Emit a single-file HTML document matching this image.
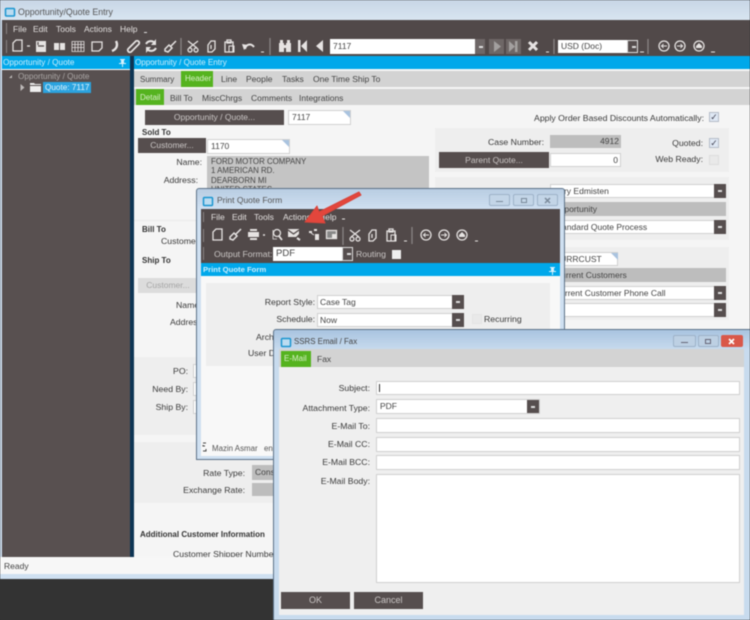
<!DOCTYPE html>
<html><head><meta charset="utf-8"><style>
html,body{margin:0;padding:0}
body{width:750px;height:620px;overflow:hidden;background:#333;position:relative;font:8.5px "Liberation Sans",sans-serif;color:#3a3a3a}
#w{position:absolute;left:0;top:0;width:750px;height:620px;overflow:hidden;filter:blur(.4px)}
.b,.t,.r{position:absolute}
.t,.r{white-space:nowrap;line-height:11px;height:11px}
.l{color:#e2dfde}
.bd{font-weight:bold;color:#333;font-size:8px}
.btn{position:absolute;background:#564e4e;color:#c9c5c4;text-align:center}
.f{position:absolute;background:#fff;border:1px solid #d0d0d0;box-sizing:border-box;padding-left:3px;color:#444;white-space:nowrap;overflow:hidden}
.g{position:absolute;background:#bdbdbd;box-sizing:border-box;padding-left:3px;color:#444;white-space:nowrap;overflow:hidden}
.dd{position:absolute;background:#564e4e;width:12px}
.dd:after{content:"";position:absolute;left:4px;top:45%;width:4px;height:2px;background:#ddd}
.cb{position:absolute;width:10px;height:10px;background:#dfe8f4;border:1px solid #b5bcc8;box-sizing:border-box;color:#445;font-size:9px;line-height:8px;text-align:center}
.c{position:absolute;border-top:7px solid #a9c3df;border-left:7px solid transparent;width:0;height:0}
.ic{position:absolute;left:0;top:0;width:750px;height:620px;overflow:visible}
.s{font-size:8.7px}
.wb{position:absolute;border:1px solid #9db2c8;box-sizing:border-box;background:#c3d5e7;border-radius:2px}
</style></head><body><div id="w">

<!-- main window -->
<div class="b" style="left:0;top:0;width:750px;height:20px;background:linear-gradient(#c8d6e6,#d8e5f1)"></div>
<svg class="ic"><rect x="5.500" y="8.500" width="9" height="7.500" rx="1" fill="#bcdcf0" stroke="#1a95d0" stroke-width="1.500"/></svg>
<div class="t" style="left:18px;top:7px;color:#555;font-size:8.800px">Opportunity/Quote Entry</div>
<div class="b" style="left:0;top:20px;width:750px;height:559px;background:#cfe0f1"></div>
<div class="b" style="left:2px;top:20px;width:748px;height:36px;background:#514949"></div>
<div class="b" style="left:6px;top:23px;width:1px;height:11px;background:#8a8484"></div>
<div class="b" style="left:6px;top:40px;width:1px;height:13px;background:#8a8484"></div>
<div class="t l" style="left:13px;top:24px">File</div>
<div class="t l" style="left:33px;top:24px">Edit</div>
<div class="t l" style="left:56px;top:24px">Tools</div>
<div class="t l" style="left:84px;top:24px">Actions</div>
<div class="t l" style="left:120px;top:24px">Help</div>
<div class="b" style="left:144px;top:32px;width:3px;height:1px;background:#ddd"></div>

<svg class="ic" fill="none" stroke="#e6e3e2" stroke-width="1.300">
<path d="M13 51V43l3-3h6v11z"/><path d="M27 46h3"/>
<path fill="#e6e3e2" stroke="none" d="M36 41h10v11H36z"/><path stroke="#514949" stroke-width="1.200" d="M38 46h6M38 42v3"/>
<path fill="#e6e3e2" stroke="none" d="M54 43h5v7h-5zM60 43h5v7h-5z"/>
<path d="M72 41.500h12v10H72zM72 44.500h12M72 47.500h12M75 42v9M78 42v9M81 42v9" stroke-width=".8"/>
<path d="M92 42h10v6l-3 3h-7z"/>
<path stroke-width="2.400" d="M116 41c2 4 1 8-4 10"/>
<path stroke-width="1.700" d="M128 49l8-8c2-1 4 1 3 3l-8 8c-2 1-4-1-3-3z"/>
<path stroke-width="2" d="M146 44a5.500 5.500 0 0 1 9-1M156 48a5.500 5.500 0 0 1-9 1"/><path fill="#e6e3e2" stroke="none" d="M156 39v6h-5zM146 53v-6h5z"/>
<path d="M176 41l-5 5M165 49l4-4 3 3-4 4-3-1z" stroke-width="1.500"/>
<path d="M181 38v17" stroke="#8a8484"/>
<path stroke-width="1.300" d="M188 41l9 7M198 41l-9 7"/><circle cx="190" cy="50" r="2"/><circle cx="196" cy="50" r="2"/>
<path d="M208 45l3-4h4v8l-3 3h-4z"/><path d="M211 45v4"/>
<path d="M225 42h8v10h-8zM227 40h4v3h-4z"/><path d="M229 46h5v6h-5z" stroke-width="1"/>
<path stroke-width="2" d="M245 49c1-5 6-6 9-2"/><path fill="#e6e3e2" stroke="none" d="M242 44l6 1-4 5z"/>
<path d="M261 52h3" stroke-width="1"/><path d="M270 38v17" stroke="#8a8484"/>
<path fill="#e6e3e2" stroke="none" d="M279 43h5v9h-5zM286 43h5v9h-5zM280 40h3v3h-3zM287 40h3v3h-3zM284 45h2v3h-2z"/>
<path fill="#e6e3e2" stroke="none" d="M298 40h2.500v12H298zM307 40v12l-6-6zM323 40v12l-7-6z"/>
<path stroke-width="3" d="M529 42l8 8M537 42l-8 8"/>
<path d="M546 52h3M640 52h4M711 52h4" stroke-width="1"/>
<path d="M554 39v15M648 39v15" stroke="#8a8484"/>
<circle cx="664" cy="46" r="5"/><path d="M661 46h6M663.500 44l-2 2 2 2" stroke-width="1"/>
<circle cx="680" cy="46" r="5"/><path d="M677 46h6M680.500 44l2 2-2 2" stroke-width="1"/>
<circle cx="699" cy="46" r="5"/><path fill="#e6e3e2" stroke="none" d="M699 43l3 3v2h-6v-2z"/>
</svg>

<div class="f" style="left:330px;top:39px;width:146px;height:15px;line-height:15px;border:0">7117</div>
<div class="dd" style="left:475px;top:39px;width:10px;height:15px;background:#6e6767"></div>
<svg class="ic"><rect x="489" y="39" width="15" height="15" fill="#6e6766"/><path d="M494 41l7 5.500-7 5.500z" fill="#a3a09f"/><rect x="506" y="39" width="15" height="15" fill="#6e6766"/><path d="M509 41l6 5.500-6 5.500zM515 41h2.500v11H515z" fill="#a3a09f"/></svg>
<div class="f" style="left:558px;top:40px;width:70px;height:13px;line-height:13px;border:0">USD (Doc)</div>
<div class="dd" style="left:627px;top:40px;width:11px;height:13px;border:1px solid #ddd;box-sizing:border-box"></div>

<!-- left pane -->
<div class="b" style="left:2px;top:56px;width:128px;height:13px;background:#00a8ea"></div>
<div class="b" style="left:2px;top:69px;width:128px;height:1px;background:#fff"></div>
<div class="b" style="left:2px;top:70px;width:128px;height:487px;background:#585050"></div>
<div class="t" style="left:3px;top:57px;color:#cdeefc;font-size:8.200px">Opportunity / Quote</div>
<svg class="ic"><path d="M120 59h5v1h-1v3h2v1h-3v3h-1v-3h-3v-1h2v-3h-1z" fill="#d8f1fb"/><path d="M9 78l3-3v3zM20.500 84v7l4-3.500z" fill="#bdb9b8"/><path d="M30 83h4l1 1h6v1H30zM30 86h11v6H30z" fill="#eee"/></svg>
<div class="t" style="left:18px;top:71px;color:#aaa6a5;font-size:8.200px">Opportunity / Quote</div>
<div class="t" style="left:43px;top:82px;width:48px;background:#2ba3df;color:#e4f5fd;padding-left:2px;box-sizing:border-box;font-size:8.200px">Quote: 7117</div>

<!-- separator + main -->
<div class="b" style="left:130px;top:56px;width:4px;height:501px;background:#0e3554"></div>
<div class="b" style="left:134px;top:56px;width:616px;height:13px;background:#00a8ea"></div>
<div class="t" style="left:135px;top:57px;color:#cdeefc;font-size:8.100px">Opportunity / Quote Entry</div>
<div class="b" style="left:134px;top:69px;width:616px;height:488px;background:#f5f5f5"></div>
<div class="b" style="left:134px;top:71px;width:616px;height:16px;background:#d3d3d3"></div>
<div class="b" style="left:134px;top:89px;width:616px;height:16px;background:#d3d3d3"></div>
<div class="b" style="left:181px;top:71px;width:32px;height:16px;background:#55b31f"></div>
<div class="b" style="left:136px;top:89px;width:28px;height:16px;background:#55b31f"></div>
<div class="t" style="left:140px;top:74px;color:#444;font-size:8px">Summary</div>
<div class="t" style="left:185px;top:73px;color:#d8efc8;font-size:8px">Header</div>
<div class="t" style="left:221px;top:74px;color:#444">Line</div>
<div class="t" style="left:246px;top:74px;color:#444">People</div>
<div class="t" style="left:282px;top:74px;color:#444">Tasks</div>
<div class="t" style="left:313px;top:74px;color:#444">One Time Ship To</div>
<div class="t" style="left:140px;top:92px;color:#d8efc8;font-size:8px">Detail</div>
<div class="t" style="left:170px;top:93px;color:#444">Bill To</div>
<div class="t" style="left:202px;top:93px;color:#444">MiscChrgs</div>
<div class="t" style="left:251px;top:93px;color:#444">Comments</div>
<div class="t" style="left:299px;top:93px;color:#444">Integrations</div>

<div class="btn" style="left:145px;top:110px;width:139px;height:15px;line-height:15px">Opportunity / Quote...</div>
<div class="f" style="left:288px;top:110px;width:63px;height:15px;line-height:13px">7117</div><div class="c" style="left:343px;top:111px"></div>
<div class="t bd" style="left:142px;top:127px">Sold To</div>
<div class="btn" style="left:138px;top:138px;width:68px;height:15px;line-height:15px">Customer...</div>
<div class="f" style="left:207px;top:139px;width:83px;height:15px;line-height:13px">1170</div><div class="c" style="left:282px;top:140px"></div>
<div class="r s" style="right:548px;top:157px">Name:</div>
<div class="r s" style="right:552px;top:175px">Address:</div>
<div class="g" style="left:207px;top:156px;width:222px;height:60px;line-height:9.300px;padding:1px 4px;background:#c4c4c4;font-size:7.900px">FORD MOTOR COMPANY<br>1 AMERICAN RD.<br>DEARBORN MI<br>UNITED STATES</div>

<div class="r" style="right:46px;top:113px;font-size:8.700px">Apply Order Based Discounts Automatically:</div>
<div class="cb" style="left:709px;top:112px">✓</div>
<div class="b" style="left:435px;top:128px;width:294px;height:44px;background:#eee"></div>
<div class="r s" style="right:206px;top:137px">Case Number:</div>
<div class="g" style="left:550px;top:135px;width:71px;height:13px;line-height:13px;text-align:right;padding-right:2px">4912</div>
<div class="btn" style="left:439px;top:152px;width:110px;height:16px;line-height:16px">Parent Quote...</div>
<div class="f" style="left:550px;top:153px;width:71px;height:14px;line-height:12px;text-align:right;padding-right:2px">0</div>
<div class="r s" style="right:47px;top:138px">Quoted:</div>
<div class="cb" style="left:709px;top:138px">✓</div>
<div class="r s" style="right:47px;top:154px">Web Ready:</div>
<div class="cb" style="left:709px;top:155px;background:#e9e9e9;border-color:#ddd"></div>

<div class="b" style="left:435px;top:177px;width:294px;height:63px;background:#eee"></div>
<div class="f" style="left:550px;top:184px;width:176px;height:14px;line-height:12px;padding-left:4px">Tory Edmisten</div><div class="dd" style="left:714px;top:184px;height:14px"></div>
<div class="g" style="left:550px;top:202px;width:176px;height:14px;line-height:14px;padding-left:3px">Opportunity</div>
<div class="f" style="left:550px;top:220px;width:176px;height:14px;line-height:12px">Standard Quote Process</div><div class="dd" style="left:714px;top:220px;height:14px"></div>
<div class="b" style="left:435px;top:247px;width:294px;height:73px;background:#eee"></div>
<div class="f" style="left:550px;top:252px;width:68px;height:14px;line-height:12px">CURRCUST</div><div class="c" style="left:611px;top:253px"></div>
<div class="g" style="left:550px;top:268px;width:176px;height:14px;line-height:14px;padding-left:5px">Current Customers</div>
<div class="f" style="left:550px;top:286px;width:176px;height:14px;line-height:12px">Current Customer Phone Call</div><div class="dd" style="left:714px;top:286px;height:14px"></div>
<div class="f" style="left:550px;top:303px;width:176px;height:14px"></div><div class="dd" style="left:714px;top:303px;height:14px"></div>

<div class="b" style="left:134px;top:220px;width:300px;height:1px;background:#eaeaea"></div>
<div class="t bd" style="left:142px;top:224px">Bill To</div>
<div class="t s" style="left:161px;top:236px">Customer</div>
<div class="t bd" style="left:142px;top:255px">Ship To</div>
<div class="btn" style="left:138px;top:278px;width:60px;height:15px;line-height:15px;background:#dcdcdc;color:#a5a5a5">Customer...</div>
<div class="t s" style="left:176px;top:300px">Name</div>
<div class="t s" style="left:170px;top:317px">Address</div>
<div class="b" style="left:134px;top:357px;width:300px;height:78px;background:#eee"></div>
<div class="r s" style="right:562px;top:366px">PO:</div>
<div class="r s" style="right:562px;top:384px">Need By:</div>
<div class="r s" style="right:562px;top:402px">Ship By:</div>
<div class="f" style="left:193px;top:364px;width:10px;height:14px"></div>
<div class="f" style="left:193px;top:382px;width:10px;height:14px"></div>
<div class="f" style="left:193px;top:400px;width:10px;height:14px"></div>
<div class="b" style="left:134px;top:442px;width:300px;height:61px;background:#eee"></div>
<div class="r s" style="right:505px;top:468px">Rate Type:</div>
<div class="g" style="left:252px;top:465px;width:30px;height:15px;line-height:15px">Cons</div>
<div class="r s" style="right:505px;top:485px">Exchange Rate:</div>
<div class="g" style="left:252px;top:483px;width:30px;height:13px"></div>
<div class="t bd" style="left:140px;top:529px">Additional Customer Information</div>
<div class="t s" style="left:173px;top:549px">Customer Shipper Number</div>

<div class="b" style="left:0;top:557px;width:750px;height:17px;background:#f7f7f7"></div>
<div class="t" style="left:4px;top:561px;color:#444">Ready</div>
<div class="b" style="left:0;top:579px;width:750px;height:41px;background:#333"></div>

<!-- Print Quote Form dialog -->
<div class="b" style="left:196px;top:188px;width:369px;height:272px;box-sizing:border-box;border:1px solid #5d7288;border-radius:3px 3px 0 0;background:linear-gradient(#b9cde2,#cfe0f1 20px)"></div>
<svg class="ic"><rect x="203.500" y="197.500" width="9" height="8" rx="1" fill="#bcdcf0" stroke="#1a95d0" stroke-width="1.500"/></svg>
<div class="t" style="left:217px;top:195px;color:#555;font-size:8.500px">Print Quote Form</div>
<div class="wb" style="left:489px;top:194px;width:21px;height:12px"></div>
<div class="wb" style="left:513px;top:194px;width:21px;height:12px"></div>
<div class="wb" style="left:537px;top:194px;width:21px;height:12px"></div>
<svg class="ic" fill="none" stroke="#7a8a9a" stroke-width="1"><path d="M496 201.500h7"/><rect x="521.500" y="198.500" width="5" height="4"/><path d="M545 198l5 5M550 198l-5 5" stroke-width="1.500"/></svg>
<div class="b" style="left:201px;top:209px;width:359px;height:54px;background:#514949"></div>
<div class="b" style="left:203px;top:212px;width:1px;height:10px;background:#8a8484"></div>
<div class="b" style="left:203px;top:229px;width:1px;height:13px;background:#8a8484"></div>
<div class="b" style="left:203px;top:247px;width:1px;height:13px;background:#8a8484"></div>
<div class="t l" style="left:211px;top:212px">File</div>
<div class="t l" style="left:232px;top:212px">Edit</div>
<div class="t l" style="left:254px;top:212px">Tools</div>
<div class="t l" style="left:283px;top:212px">Actions</div>
<div class="t l" style="left:319px;top:212px">Help</div>
<svg class="ic" fill="none" stroke="#e6e3e2" stroke-width="1.300">
<path d="M342 219h3" stroke-width="1"/>
<path d="M213 240v-8l3-3h6v11z"/>
<path d="M241 229l-5 5M230 237l4-4 3 3-4 4-3-1z" stroke-width="1.500"/>
<path fill="#e6e3e2" stroke="none" d="M248 232h11v5h-11zM250 229h7v2h-7zM250 238h7v2h-7z"/><path d="M263 235h2" stroke-width="1.500"/>
<circle cx="277" cy="233" r="3.500"/><path d="M279 236l3 4" stroke-width="1.800"/><path d="M273 230v9h4" stroke-width=".8"/>
<path fill="#e6e3e2" stroke="none" d="M288 229h11v5l-3 3h-8z"/><path d="M288 230l5.500 4 5.500-4" stroke="#514949"/><path d="M297 238l3 2" stroke-width="2"/>
<path fill="#e6e3e2" stroke="none" d="M309 231h3v2h-3zM314 229h3v2h-3zM315 234h4v6h-4z"/><path d="M311 233l3 2" stroke-width="1"/>
<rect x="326.500" y="230.500" width="10" height="8" fill="#888"/><path fill="#e6e3e2" stroke="none" d="M332 234h5v5h-5z"/>
<path d="M343 227v18" stroke="#8a8484"/>
<path d="M350 230l9 7M360 230l-9 7"/><circle cx="352" cy="239" r="2"/><circle cx="358" cy="239" r="2"/>
<path d="M369 234l3-4h4v8l-3 3h-4z"/><path d="M372 234v4"/>
<path d="M387 231h8v10h-8zM389 229h4v3h-4z"/><path d="M391 235h5v6h-5z" stroke-width="1"/>
<path d="M404 241h3M475 241h3" stroke-width="1"/>
<path d="M412 227v17" stroke="#8a8484"/>
<circle cx="426" cy="235" r="5"/><path d="M423 235h6M425.500 233l-2 2 2 2" stroke-width="1"/>
<circle cx="444" cy="235" r="5"/><path d="M441 235h6M444.500 233l2 2-2 2" stroke-width="1"/>
<circle cx="462" cy="235" r="5"/><path fill="#e6e3e2" stroke="none" d="M462 232l3 3v2h-6v-2z"/>
</svg>
<div class="t s" style="left:214px;top:249px;color:#c9c5c4">Output Format:</div>
<div class="f" style="left:273px;top:247px;width:70px;height:14px;line-height:14px;border:0;font-size:9.500px">PDF</div>
<div class="dd" style="left:342px;top:247px;width:11px;height:14px;border:1px solid #ddd;box-sizing:border-box"></div>
<div class="t s" style="left:356px;top:249px;color:#c9c5c4">Routing</div>
<div class="b" style="left:392px;top:250px;width:9px;height:9px;background:#eee"></div>
<div class="b" style="left:201px;top:263px;width:359px;height:13px;background:#00a8ea"></div>
<div class="t" style="left:203px;top:264px;color:#cdeefc;font-weight:bold;font-size:7.700px">Print Quote Form</div>
<svg class="ic"><path d="M550 267h5v1h-1v3h2v1h-3v3h-1v-3h-3v-1h2v-3h-1z" fill="#d8f1fb"/></svg>
<div class="b" style="left:201px;top:276px;width:359px;height:180px;background:#f8f8f8"></div>
<div class="b" style="left:206px;top:283px;width:344px;height:83px;background:#eee"></div>
<div class="r s" style="right:435px;top:297px">Report Style:</div>
<div class="f" style="left:317px;top:295px;width:147px;height:14px;line-height:12px;padding-left:2px">Case Tag</div><div class="dd" style="left:452px;top:295px;height:14px"></div>
<div class="r s" style="right:435px;top:314px">Schedule:</div>
<div class="f" style="left:317px;top:313px;width:147px;height:14px;line-height:12px;padding-left:2px">Now</div><div class="dd" style="left:452px;top:313px;height:14px"></div>
<div class="cb" style="left:472px;top:314px;background:#e9e9e9;border-color:#e4e4e4"></div>
<div class="t s" style="left:484px;top:314px">Recurring</div>
<div class="t s" style="left:256px;top:332px">Archive</div>
<div class="t s" style="left:248px;top:348px">User Description</div>
<svg class="ic"><path d="M203 443h3M203 445v1h2M203 451h3v-2" fill="none" stroke="#444"/></svg>
<div class="t" style="left:212px;top:443px;color:#555;font-size:7.900px">Mazin Asmar</div>
<div class="t" style="left:264px;top:443px;color:#555;font-size:7.900px">en</div>

<!-- Red arrow -->
<svg class="ic"><path d="M359 192L319 212l-2-6-12 16 20 1-3-7 39-21z" fill="#e3463c" stroke="#d8443a" stroke-linejoin="round"/></svg>

<!-- SSRS dialog -->
<div class="b" style="left:273px;top:329px;width:480px;height:295px;box-sizing:border-box;border:1px solid #5d7288;border-radius:3px 3px 0 0;background:linear-gradient(#a9c4e0,#c8dbee 20px)"></div>
<svg class="ic"><rect x="281.500" y="338.500" width="9" height="8" rx="1" fill="#bcdcf0" stroke="#1a95d0" stroke-width="1.500"/></svg>
<div class="t" style="left:294px;top:336px;color:#444;font-size:7.900px">SSRS Email / Fax</div>
<div class="wb" style="left:673px;top:335px;width:23px;height:12px;background:#bdd0e3"></div>
<div class="wb" style="left:698px;top:335px;width:21px;height:12px;background:#bdd0e3"></div>
<div class="b" style="left:721px;top:335px;width:22px;height:12px;background:#d9584a;border-radius:2px"></div>
<svg class="ic" fill="none" stroke="#667"><path d="M681 342.500h7"/><rect x="705.500" y="339.500" width="5" height="4"/><path d="M729 339l5 5M734 339l-5 5" stroke="#fff" stroke-width="1.600"/></svg>
<div class="b" style="left:279px;top:349px;width:465px;height:18px;background:#d3d3d3"></div>
<div class="b" style="left:281px;top:351px;width:30px;height:16px;background:#55b31f"></div>
<div class="t" style="left:284px;top:353px;color:#d8efc8;font-size:8px">E-Mail</div>
<div class="t" style="left:317px;top:354px;color:#444">Fax</div>
<div class="b" style="left:279px;top:367px;width:465px;height:248px;background:#efefef"></div>
<div class="r s" style="right:380px;top:383px">Subject:</div>
<div class="f" style="left:376px;top:381px;width:364px;height:14px"></div>
<div class="b" style="left:379px;top:384px;width:1px;height:8px;background:#333"></div>
<div class="r s" style="right:380px;top:403px">Attachment Type:</div>
<div class="f" style="left:376px;top:399px;width:164px;height:15px;line-height:13px;padding-left:3px">PDF</div><div class="dd" style="left:527px;top:400px;height:13px"></div>
<div class="r s" style="right:380px;top:421px">E-Mail To:</div>
<div class="f" style="left:376px;top:418px;width:364px;height:15px"></div>
<div class="r s" style="right:380px;top:439px">E-Mail CC:</div>
<div class="f" style="left:376px;top:437px;width:364px;height:15px"></div>
<div class="r s" style="right:380px;top:457px">E-Mail BCC:</div>
<div class="f" style="left:376px;top:455px;width:364px;height:15px"></div>
<div class="r s" style="right:380px;top:476px">E-Mail Body:</div>
<div class="f" style="left:376px;top:474px;width:364px;height:109px"></div>
<div class="btn" style="left:281px;top:592px;width:69px;height:17px;line-height:17px;font-size:9px">OK</div>
<div class="btn" style="left:354px;top:592px;width:69px;height:17px;line-height:17px;font-size:9px">Cancel</div>
</div></body></html>
